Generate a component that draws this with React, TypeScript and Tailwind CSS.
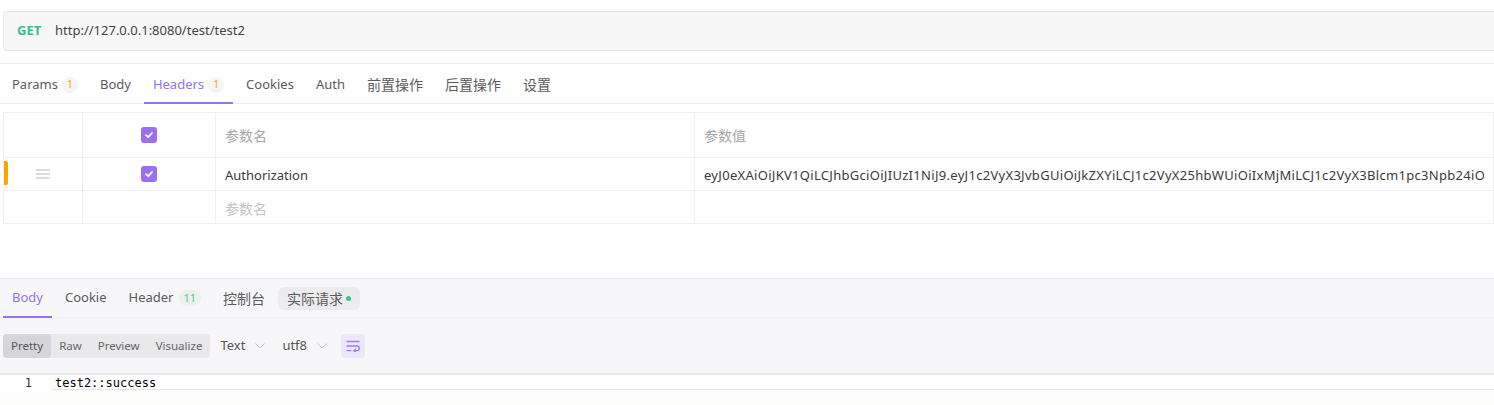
import React from 'react';

const token =
  'eyJ0eXAiOiJKV1QiLCJhbGciOiJIUzI1NiJ9.eyJ1c2VyX3JvbGUiOiJkZXYiLCJ1c2VyX25hbWUiOiIxMjMiLCJ1c2VyX3Blcm1pc3Npb24iO';

const Check = () => (
  <div className="w-4 h-4 rounded-[3px] bg-[#9a70f0] flex items-center justify-center">
    <svg width="10" height="10" viewBox="0 0 10 10">
      <path d="M2 5.2 L4.2 7.2 L8 3" stroke="white" strokeWidth="1.8" fill="none" strokeLinecap="round" strokeLinejoin="round" />
    </svg>
  </div>
);

const Chevron = () => (
  <svg width="10" height="6" viewBox="0 0 10 6" className="ml-[10px]">
    <path d="M0.5 0.5 L5 5 L9.5 0.5" stroke="#c4c4c4" strokeWidth="1" fill="none" />
  </svg>
);

export default function App() {
  const topTabs: { label: string; badge?: string; active?: boolean; cjk?: boolean }[] = [
    { label: 'Params', badge: '1' },
    { label: 'Body' },
    { label: 'Headers', badge: '1', active: true },
    { label: 'Cookies' },
    { label: 'Auth' },
    { label: '前置操作', cjk: true },
    { label: '后置操作', cjk: true },
    { label: '设置', cjk: true },
  ];

  return (
    <div className="w-[1494px] h-[405px] overflow-hidden bg-white text-[13px] text-[#555] font-['Noto_Sans','Noto_Sans_CJK_SC',sans-serif]">
      {/* URL bar */}
      <div className="pt-[11px] pl-[3px]">
        <div className="w-[1510px] h-[40px] flex items-center rounded-[4px] border border-[#e6e6ec] bg-[#f7f7f7] pl-[13px]">
          <span className="font-bold text-[#36c08f] w-[38px]">GET</span>
          <span className="text-[#444]">http://127.0.0.1:8080/test/test2</span>
        </div>
      </div>

      {/* Request tabs */}
      <div className="mt-[12px] border-t border-b border-[#ebebeb] h-[41px] flex items-stretch pl-[3px] gap-[4px]">
        {topTabs.map((t) => (
          <div key={t.label} className="relative flex items-center px-[9px] pt-[2px]">
            <span className={(t.active ? 'text-[#9373ee]' : 'text-[#5a5a5a]') + (t.cjk ? ' text-[14px]' : '')}>{t.label}</span>
            {t.badge && (
              <span className="ml-[4px] w-[16px] h-[16px] rounded-full bg-[#f4f4f4] text-[#f5a623] text-[11px] flex items-center justify-center">
                {t.badge}
              </span>
            )}
            {t.active && <div className="absolute left-0 right-0 bottom-[-1px] h-[2px] bg-[#9373ee]" />}
          </div>
        ))}
      </div>

      {/* Headers table */}
      <div className="mt-[8px] ml-[3px] w-[1491px] border-l border-t border-[#efefef]">
        <div className="flex h-[45px]">
          <div className="w-[79px] border-r border-b border-[#efefef]" />
          <div className="w-[133px] border-r border-b border-[#efefef] flex items-center justify-center">
            <Check />
          </div>
          <div className="w-[479px] border-r border-b border-[#efefef] flex items-center pl-[9px] text-[14px] text-[#a8a8a8]">参数名</div>
          <div className="flex-1 border-r border-b border-[#efefef] flex items-center pl-[9px] text-[14px] text-[#a8a8a8]">参数值</div>
        </div>
        <div className="flex h-[33px]">
          <div className="relative w-[79px] border-r border-b border-[#efefef] flex items-center">
            <div className="absolute left-0 top-[3px] w-[4px] h-[24px] rounded-r-[2px] bg-[#ffa300]" />
            <div className="ml-[32px] flex flex-col gap-[2.5px]">
              <div className="w-[14px] h-[1.5px] bg-[#dcdcdc]" />
              <div className="w-[14px] h-[1.5px] bg-[#dcdcdc]" />
              <div className="w-[14px] h-[1.5px] bg-[#dcdcdc]" />
            </div>
          </div>
          <div className="w-[133px] border-r border-b border-[#efefef] flex items-center justify-center">
            <Check />
          </div>
          <div className="w-[479px] border-r border-b border-[#efefef] flex items-center pl-[9px] pt-[3px] text-[#3a3a3a]">Authorization</div>
          <div className="flex-1 min-w-0 border-r border-b border-[#efefef] flex items-center pl-[9px] pr-[9px] pt-[3px]">
            <span className="block overflow-hidden whitespace-nowrap tracking-[0.3px] text-[#3a3a3a]">{token}</span>
          </div>
        </div>
        <div className="flex h-[33px]">
          <div className="w-[79px] border-r border-b border-[#efefef]" />
          <div className="w-[133px] border-r border-b border-[#efefef]" />
          <div className="w-[479px] border-r border-b border-[#efefef] flex items-center pl-[9px] pt-[3px] text-[14px] text-[#c4c4c4]">参数名</div>
          <div className="flex-1 border-r border-b border-[#efefef]" />
        </div>
      </div>

      {/* Response panel */}
      <div className="mt-[54px] border-t border-[#e6e6ec] bg-[#f7f7fa]">
        <div className="h-[39px] flex items-stretch pl-[3px] gap-[4px] border-b border-[#efeff3]">
          <div className="relative flex items-center px-[9px] text-[#9373ee]">
            Body
            <div className="absolute left-0 right-0 bottom-[-1px] h-[2px] bg-[#9373ee]" />
          </div>
          <div className="flex items-center px-[9px] text-[#5a5a5a]">Cookie</div>
          <div className="flex items-center px-[9px] text-[#5a5a5a]">
            Header
            <span className="ml-[5px] h-[16px] px-[5px] rounded-full bg-[#e8f3ec] text-[#5fc08f] text-[11px] flex items-center">11</span>
          </div>
          <div className="flex items-center px-[9px] text-[14px] text-[#5a5a5a]">控制台</div>
          <div className="flex items-center">
            <div className="h-[23px] flex items-center px-[9px] rounded-[6px] bg-[#ececef] text-[14px] text-[#5a5a5a]">
              实际请求
              <span className="ml-[3px] w-[5px] h-[5px] rounded-full bg-[#3cc68a]" />
            </div>
          </div>
        </div>

        <div className="h-[55px] flex items-center pl-[3px]">
          <div className="h-[24px] flex items-stretch rounded-[4px] bg-[#e9e9ec] text-[11.5px] text-[#666]">
            <div className="flex items-center px-[8px] rounded-[4px] bg-[#d6d6da] text-[#555]">Pretty</div>
            <div className="flex items-center px-[8px]">Raw</div>
            <div className="flex items-center px-[8px]">Preview</div>
            <div className="flex items-center px-[8px]">Visualize</div>
          </div>
          <div className="ml-[10px] flex items-center text-[13px] text-[#555]">
            Text
            <Chevron />
          </div>
          <div className="ml-[17px] flex items-center text-[13px] text-[#555]">
            utf8
            <Chevron />
          </div>
          <div className="ml-[14px] w-[24px] h-[24px] rounded-[4px] bg-[#ece7fd] flex items-center justify-center">
            <svg width="14" height="12" viewBox="0 0 14 12" fill="none" stroke="#9d7ef0" strokeWidth="1.3" strokeLinecap="round">
              <path d="M1 1.5 H13" />
              <path d="M1 6 H11 A2.3 2.3 0 0 1 11 10.6 H8" />
              <path d="M9.4 9.2 L8 10.6 L9.4 12" />
              <path d="M1 10.6 H5" />
            </svg>
          </div>
        </div>
      </div>

      {/* Editor */}
      <div className="border-t-2 border-[#e8e8e8] bg-[#fdfdfb] h-[40px]">
        <div className="flex h-[15px] font-['DejaVu_Sans_Mono',monospace] text-[12px]">
          <div className="w-[52px] text-right pr-[20px] text-[#333] leading-[16px] bg-white">1</div>
          <div className="flex-1 bg-white border-b border-[#e6e6e6] pl-[3px] leading-[16px] text-black">test2::success</div>
        </div>
      </div>
    </div>
  );
}
